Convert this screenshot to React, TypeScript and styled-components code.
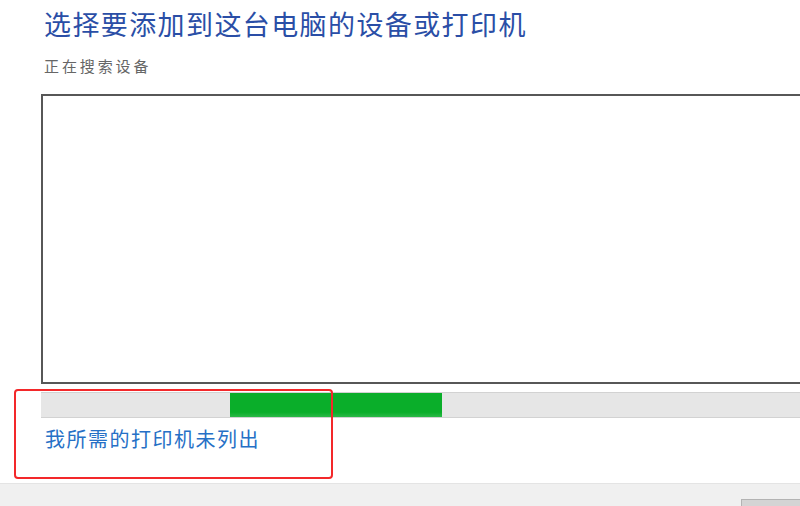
import React from "react";
import styled, { createGlobalStyle } from "styled-components";

const Global = createGlobalStyle`
  html, body { margin: 0; padding: 0; background: #ffffff; }
  body { font-family: "Noto Sans CJK SC", "Noto Sans", sans-serif; }
`;

const Page = styled.div`
  position: relative;
  width: 800px;
  height: 506px;
  overflow: hidden;
  display: flex;
  flex-direction: column;
  background: #ffffff;
`;

const Content = styled.div`
  display: flex;
  flex-direction: column;
  padding-left: 41px;
`;

const Title = styled.h1`
  margin: 9px 0 0 3px;
  font-size: 27px;
  line-height: 30px;
  font-weight: 400;
  letter-spacing: 1.4px;
  color: #2a4ea6;
  white-space: nowrap;
`;

const Subtitle = styled.div`
  margin: 18px 0 0 3px;
  font-size: 15px;
  line-height: 18px;
  letter-spacing: 2.9px;
  color: #666666;
`;

const DeviceList = styled.div`
  margin-top: 19px;
  width: 800px;
  height: 286px;
  border: 2px solid #575757;
  border-right: none;
  background: #ffffff;
`;

const Progress = styled.div`
  margin-top: 8px;
  width: 800px;
  height: 24px;
  background: #e6e6e6;
  border-top: 1px solid #d2d2d2;
  border-bottom: 1px solid #d2d2d2;
  display: flex;
  align-items: stretch;
`;

const ProgressFill = styled.div<{ $offset: number; $width: number }>`
  margin-left: ${(p) => p.$offset}px;
  width: ${(p) => p.$width}px;
  background: linear-gradient(#0aae2a, #0aae2a 80%, #2bb947);
`;

const Link = styled.a`
  margin: 9px 0 0 4px;
  font-size: 20px;
  line-height: 24px;
  letter-spacing: 1.5px;
  color: #2670c6;
  text-decoration: none;
  cursor: pointer;
  align-self: flex-start;
`;

const Footer = styled.div`
  margin-top: auto;
  height: 22px;
  background: #f0f0f0;
  border-top: 1px solid #e4e4e4;
  display: flex;
  justify-content: flex-end;
  align-items: flex-end;
`;

const FooterButton = styled.button`
  width: 59px;
  height: 7px;
  margin: 0;
  padding: 0;
  border: 1px solid #b3b3b3;
  border-bottom: none;
  border-right: none;
  background: #d4d4d4;
`;

const Highlight = styled.div`
  position: absolute;
  left: 14px;
  top: 389px;
  width: 315px;
  height: 86px;
  border: 2px solid #f3282a;
  border-radius: 4px;
  pointer-events: none;
`;

export default function App() {
  return (
    <Page>
      <Global />
      <Content>
        <Title>选择要添加到这台电脑的设备或打印机</Title>
        <Subtitle>正在搜索设备</Subtitle>
        <DeviceList />
        <Progress>
          <ProgressFill $offset={189} $width={212} />
        </Progress>
        <Link>我所需的打印机未列出</Link>
      </Content>
      <Footer>
        <FooterButton />
      </Footer>
      <Highlight />
    </Page>
  );
}
